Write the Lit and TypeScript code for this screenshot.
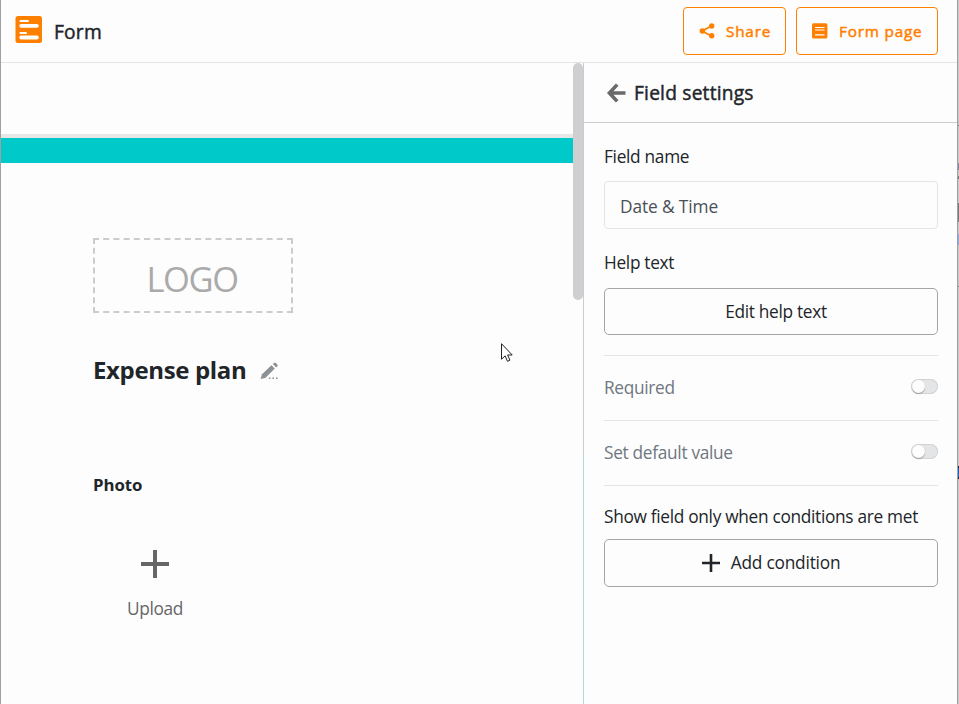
import { LitElement, html, css, svg } from "lit";
import { customElement } from "lit/decorators.js";

const formIcon = html`<svg class="logo" width="27" height="27" viewBox="0 0 27 27">
  <rect x=".5" width="26.5" height="27" rx="2.5" fill="#ff8000" />
  <g stroke="#fff" stroke-linecap="round">
    <path d="M5.5 5H13M5.5 17H11" stroke-width="2" />
    <path d="M6.2 9.8H21.9M6.2 21.5H21.9" stroke-width="3.8" />
  </g>
</svg>`;

const shareIcon = html`<svg width="16" height="16" viewBox="0 0 16 16" fill="#ff8000">
  <path d="M12.5 3L3 8L12.5 13" fill="none" stroke="#ff8000" stroke-width="1.8" />
  <circle cx="12.7" cy="3" r="2.7" /><circle cx="3.4" cy="8" r="2.8" /><circle cx="12.7" cy="12.8" r="2.7" />
</svg>`;

const pageIcon = html`<svg width="16" height="16" viewBox="0 0 16 16">
  <rect y="0.3" width="15.4" height="15.2" rx="1.6" fill="#ff8000" />
  <path d="M3 4.5H12.5M3 7H12.5M3 11.8H12.5" stroke="#fff" stroke-width="1.2" />
</svg>`;

const backIcon = html`<svg width="20" height="20" viewBox="0 0 20 20">
  <path d="M11.2 1.6L3.4 10L11.2 18.4M3.4 10H19.5" fill="none" stroke="#6a6a6a" stroke-width="3.6" />
</svg>`;

const pencilIcon = html`<svg class="pencil" width="20" height="18" viewBox="0 0 20 18" fill="#8c9196">
  <path d="M.6 17L2 12.2L11.4 3.2L14.8 6.6L5.3 15.9Z" />
  <path d="M12.8 2.1L14.1 .9Q15 .2 16 1.2L17.3 2.5Q18.2 3.4 17.4 4.2L16.2 5.5Z" />
  <path d="M8.8 15.5h1.6v1.6h-1.6zM12.4 15.5h1.6v1.6h-1.6zM16 15.5h1.6v1.6h-1.6z" />
</svg>`;

const plus = (size: number, weight: number, color: string) => html`<svg
  width=${size} height=${size} viewBox="0 0 ${size} ${size}">
  ${svg`<path d="M${size / 2} 0V${size}M0 ${size / 2}H${size}" stroke=${color} stroke-width=${weight} />`}
</svg>`;

@customElement("toggle-row")
export class ToggleRow extends LitElement {
  static styles = css`
    :host { display: flex; align-items: center; justify-content: space-between; height: 65px; border-bottom: 1px solid #e5e5e5; color: #6f7780; }
    .track { width: 27px; height: 15px; border-radius: 8px; background: #e4e5e7; box-shadow: inset 0 0 0 1px #d2d3d5; margin-top: -3px; display: flex; }
    .knob { width: 13px; height: 13px; margin: 1px; border-radius: 50%; background: #fdfdfd; box-shadow: 0 1px 1px #999; }
  `;
  render() {
    return html`<span><slot></slot></span><span class="track"><span class="knob"></span></span>`;
  }
}

@customElement("app-root")
export class AppRoot extends LitElement {
  static styles = css`
    :host {
      display: flex; box-sizing: border-box; width: 959px; height: 704px; overflow: hidden;
      background: linear-gradient(#c8c8c8 125px, #777 125px 126px, #c8c8c8 126px 163px, #8a8aa0 163px 170px, #c8c8c8 170px 176px, #777 176px 179px, #c8c8c8 179px 203px, #777 203px 222px, #c8c8c8 222px 234px, #8fa5d8 234px 245px, #c8c8c8 245px 286px, #888 286px 287px, #c8c8c8 287px 466px, #223 466px 468px, #2262b0 468px 477px, #223 477px 479px, #c8c8c8 479px);
      font: 17.3px/24px "Open Sans", "Noto Sans", sans-serif; letter-spacing: -.31px; color: #212529;
    }
    * { box-sizing: border-box; }
    svg { display: block; flex: none; }
    .window { width: 958px; height: 704px; border: solid #a0a0a0; border-width: 0 1px; background: #fdfdfd; display: flex; flex-direction: column; }
    header { height: 63px; flex: none; border-bottom: 1px solid #e5e5e5; display: flex; align-items: center; padding: 0 19px 0 14px; }
    .logo { margin-top: -3px; }
    .app, .head { font-size: 19.2px; letter-spacing: .2px; -webkit-text-stroke: .45px #212529; }
    .app { margin: 1px auto 0 12px; }
    .btn { height: 48px; border: 1px solid #ff8000; border-radius: 4px; color: #ff8000; display: flex; align-items: center; gap: 11px; padding: 0 15px; font-size: 15.3px; letter-spacing: .8px; -webkit-text-stroke: .5px #ff8000; margin-left: 10px; white-space: nowrap; }
    .btn svg { -webkit-text-stroke: 0; }
    .share { width: 103px; }
    .page { width: 142px; }
    main { flex: 1; display: flex; min-height: 0; }
    .canvas { width: 572px; padding-top: 71px; }
    .band { height: 29px; background: #00cac9; border-top: 4px solid #e8e7e5; }
    .sheet { padding: 75px 0 0 92px; }
    .logo-box { width: 200px; height: 75px; border: 2px dashed #ccc; display: flex; align-items: center; justify-content: center; font-size: 34.5px; letter-spacing: -1.4px; color: #aaa; padding: 6px 2px 0 0; }
    .title { display: flex; align-items: center; margin-top: 40px; height: 34px; font-size: 24px; font-weight: 700; letter-spacing: -.35px; }
    .pencil { margin: 2px 0 0 14px; }
    .photo { margin-top: 86px; font-weight: 700; font-size: 16.8px; letter-spacing: -.05px; }
    .upload { width: 124px; margin-top: 53px; display: flex; flex-direction: column; align-items: center; gap: 19px; color: #666; }
    .scroll { width: 10px; }
    .thumb { height: 237px; border-radius: 5px; background: #cfcfd1; }
    aside { flex: 1; border-left: 1px solid; border-image: linear-gradient(#ccc 392px, #a9dcd9 392px) 1; }
    .head { height: 60px; border-bottom: 1px solid #ccc; display: flex; align-items: center; padding-left: 22px; gap: 8px; }
    .body { padding: 22px 19px 0 20px; }
    .label { height: 24px; white-space: nowrap; }
    .input { height: 48px; margin: 12px 0 22px; border: 1px solid #e5e5e5; border-radius: 4px; padding: 3px 15px 0; display: flex; align-items: center; color: #495057; letter-spacing: -.1px; }
    .wide { height: 48px; border: 1px solid #a5a5a5; border-radius: 5px; display: flex; align-items: center; justify-content: center; gap: 11px; }
    .edit { height: 47px; margin-top: 13px; padding-left: 10px; }
    .line { height: 1px; background: #e5e5e5; margin-top: 20px; }
    .cond { margin: 19px 0 10px; }
    .add { letter-spacing: -.2px; }
    .cursor { position: absolute; left: 501px; top: 343px; }
  `;

  render() {
    return html`
      <div class="window">
        <header>
          ${formIcon}<span class="app">Form</span>
          <div class="btn share">${shareIcon}<span>Share</span></div>
          <div class="btn page">${pageIcon}<span>Form page</span></div>
        </header>
        <main>
          <section class="canvas">
            <div class="band"></div>
            <div class="sheet">
              <div class="logo-box"><span>LOGO</span></div>
              <div class="title"><span>Expense plan</span>${pencilIcon}</div>
              <div class="photo">Photo</div>
              <div class="upload">${plus(28, 4, "#666")}<span>Upload</span></div>
            </div>
          </section>
          <div class="scroll"><div class="thumb"></div></div>
          <aside>
            <div class="head">${backIcon}<span>Field settings</span></div>
            <div class="body">
              <div class="label"><span>Field name</span></div>
              <div class="input"><span>Date &amp; Time</span></div>
              <div class="label"><span>Help text</span></div>
              <div class="wide edit"><span>Edit help text</span></div>
              <div class="line"></div>
              <toggle-row>Required</toggle-row>
              <toggle-row>Set default value</toggle-row>
              <div class="label cond"><span>Show field only when conditions are met</span></div>
              <div class="wide add">${plus(18, 2.6, "#212529")}<span>Add condition</span></div>
            </div>
          </aside>
        </main>
      </div>
      <svg class="cursor" width="12" height="20" viewBox="0 0 12 20">
        <path d="M.5 .7V16.2L4.1 12.9L6.5 18.3L8.9 17.2L6.6 12H11.2Z" fill="#fff" stroke="#222" />
      </svg>
    `;
  }
}
